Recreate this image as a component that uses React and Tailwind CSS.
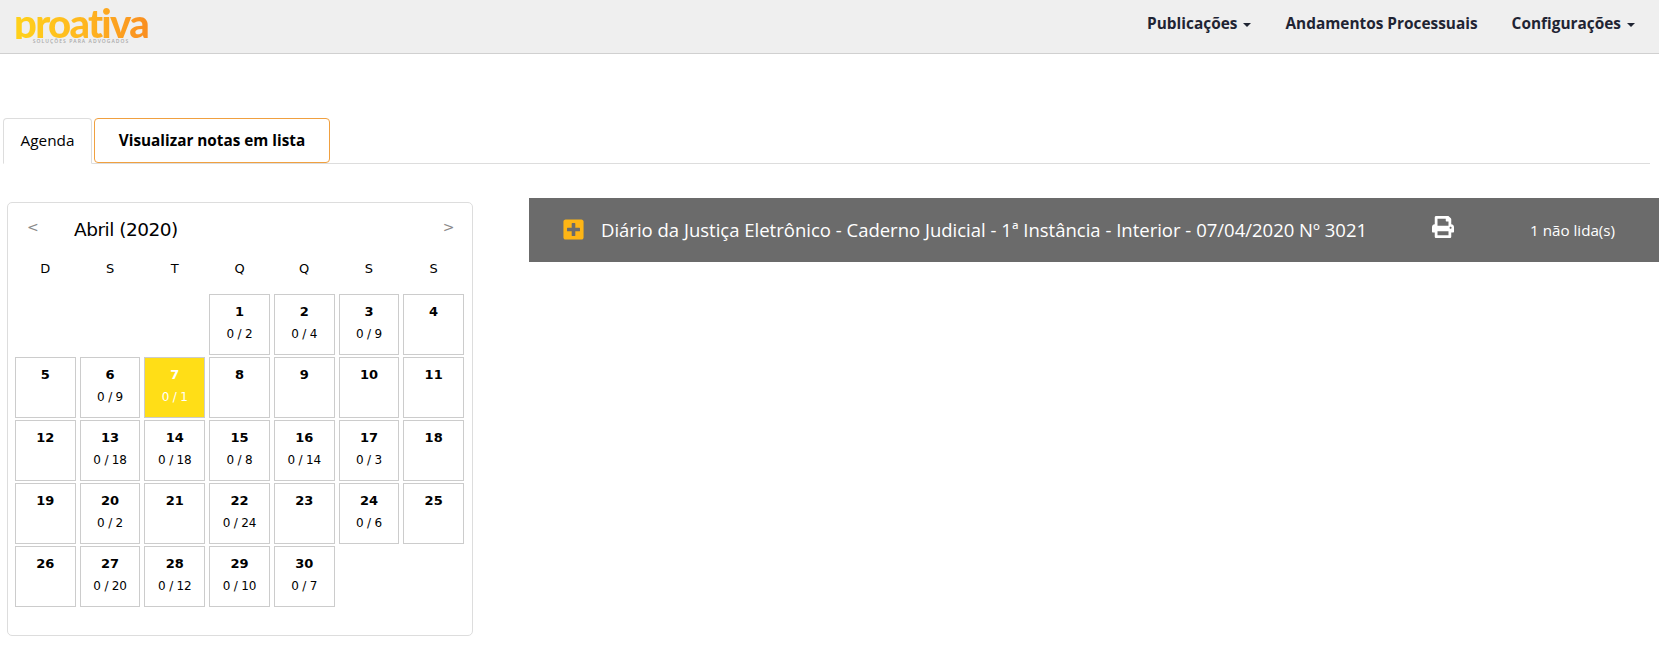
import { FaPlusSquare, FaPrint } from 'react-icons/fa'

const days = [
  null, null, null,
  { d: 1, c: '0 / 2' }, { d: 2, c: '0 / 4' }, { d: 3, c: '0 / 9' }, { d: 4 },
  { d: 5 }, { d: 6, c: '0 / 9' }, { d: 7, c: '0 / 1', active: true }, { d: 8 }, { d: 9 }, { d: 10 }, { d: 11 },
  { d: 12 }, { d: 13, c: '0 / 18' }, { d: 14, c: '0 / 18' }, { d: 15, c: '0 / 8' }, { d: 16, c: '0 / 14' }, { d: 17, c: '0 / 3' }, { d: 18 },
  { d: 19 }, { d: 20, c: '0 / 2' }, { d: 21 }, { d: 22, c: '0 / 24' }, { d: 23 }, { d: 24, c: '0 / 6' }, { d: 25 },
  { d: 26 }, { d: 27, c: '0 / 20' }, { d: 28, c: '0 / 12' }, { d: 29, c: '0 / 10' }, { d: 30, c: '0 / 7' },
]

const weekdays = ['D', 'S', 'T', 'Q', 'Q', 'S', 'S']

function Caret() {
  return <span className="ml-[6px] inline-block h-0 w-0 border-x-[4px] border-t-[4px] border-x-transparent border-t-[#1f2433] align-middle" />
}

function Logo() {
  return (
    <div className="-mt-[2px] ml-[13px] flex w-[136px] flex-col items-center">
      <span className="h-[32px] bg-gradient-to-r from-[#ffd21a] via-[#ffb81f] to-[#f98e20] bg-clip-text font-['Lato'] text-[40px] leading-[32px] font-black tracking-[-1.7px] text-transparent">
        proativa
      </span>
      <span className="-mt-[1px] font-['Open_Sans'] text-[5px] leading-[6px] font-semibold tracking-[1.05px] text-[#a9a9a9]">
        SOLUÇÕES PARA ADVOGADOS
      </span>
    </div>
  )
}

function Navbar() {
  return (
    <header className="flex h-[54px] items-center justify-between border-b border-[#d0d0d0] bg-[#efefef]">
      <Logo />
      <nav className="mr-[24px] flex items-center pb-[6px] font-['Open_Sans'] text-[15.4px] font-bold text-[#1f2433]">
        <span>Publicações<Caret /></span>
        <span className="ml-[34px]">Andamentos Processuais</span>
        <span className="ml-[34px]">Configurações<Caret /></span>
      </nav>
    </header>
  )
}

function Tabs() {
  return (
    <div className="mt-[64px] mr-[9px] ml-[3px] flex h-[46px] gap-[2px] border-b border-[#dddddd] font-['Open_Sans'] text-[15.3px]">
      <div className="-mb-px flex h-[46px] w-[89px] items-center justify-center rounded-t-[4px] border border-b-white border-[#dddddd] bg-white pb-[1px] text-black">
        Agenda
      </div>
      <div className="flex h-[45px] w-[236px] items-center justify-center rounded-[4px] border border-[#f0a040] pb-[1px] font-bold text-black">
        Visualizar notas em lista
      </div>
    </div>
  )
}

function Calendar() {
  return (
    <div className="mt-[38px] ml-[7px] h-[434px] w-[466px] shrink-0 rounded-[5px] border border-[#dddddd] pt-[14px] pl-[7px] font-['DejaVu_Sans'] text-black">
      <div className="flex h-[26px] items-center">
        <span className="-mt-[5px] ml-[12px] w-[47px] text-[14px] text-[#8a8a8a]">&lt;</span>
        <span className="text-[18.5px] leading-[26px] tracking-[-0.5px]">Abril (2020)</span>
        <span className="-mt-[5px] ml-[265px] text-[14px] text-[#8a8a8a]">&gt;</span>
      </div>
      <div className="mt-[14px] grid w-[449px] grid-cols-7 gap-x-[4px] text-center text-[13px] leading-[24px]">
        {weekdays.map((w, i) => (
          <span key={i}>{w}</span>
        ))}
      </div>
      <div className="mt-[13px] grid w-[449px] grid-cols-7 gap-x-[4px] gap-y-[2px] text-center">
        {days.map((day, i) =>
          day ? (
            <div
              key={i}
              className={day.active
                ? 'h-[61px] border border-[#cccccc] bg-[#ffde17] pt-[7px] text-white'
                : 'h-[61px] border border-[#cccccc] pt-[7px] text-black'}
            >
              <div className="text-[13px] leading-[20px] font-bold">{day.d}</div>
              <div className="mt-[2px] text-[12px] leading-[20px] tracking-[-0.2px]">{day.c}</div>
            </div>
          ) : (
            <div key={i} className="h-[61px]" />
          ),
        )}
      </div>
    </div>
  )
}

function DiarioBar() {
  return (
    <div className="mt-[34px] ml-[56px] flex h-[64px] flex-1 items-center bg-[#6b6b6b] font-['Open_Sans'] text-white">
      <FaPlusSquare className="-mt-[2px] ml-[33px] text-[#fdb515]" size={23} />
      <span className="ml-[16px] w-[831px] text-[18.5px]">
        Diário da Justiça Eletrônico - Caderno Judicial - 1ª Instância - Interior - 07/04/2020 Nº 3021
      </span>
      <FaPrint className="-mt-[6px]" size={22} />
      <span className="ml-[76px] text-[15.2px]">1 não lida(s)</span>
    </div>
  )
}

export default function App() {
  return (
    <div className="h-[647px] w-full overflow-hidden bg-white">
      <Navbar />
      <Tabs />
      <div className="flex items-start">
        <Calendar />
        <DiarioBar />
      </div>
    </div>
  )
}
